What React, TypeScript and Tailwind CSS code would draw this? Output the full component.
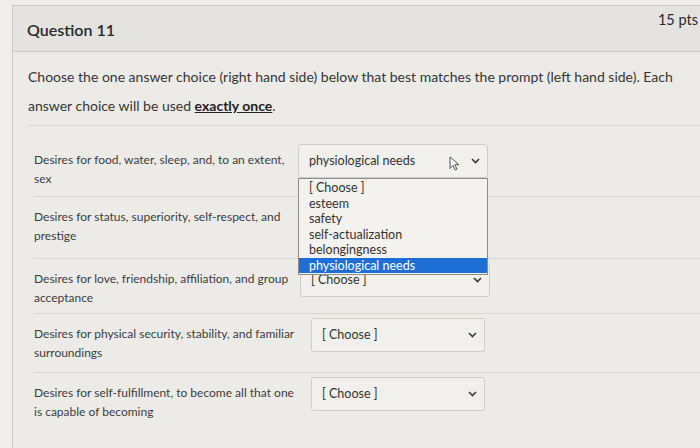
import React from "react";

const OPTIONS = ["[ Choose ]", "esteem", "safety", "self-actualization", "belongingness", "physiological needs"];

function Chevron() {
  return (
    <svg width="9" height="6" viewBox="0 0 9 6" className="shrink-0">
      <path d="M1 1l3.5 3.5L8 1" fill="none" stroke="#3a3a3a" strokeWidth="1.6" />
    </svg>
  );
}

function Cursor() {
  return (
    <svg width="11" height="15" viewBox="0 0 11 15" className="absolute left-[150px] top-[11px]">
      <path d="M1 1v11.5l3-3 2.2 4.5 1.8-.9-2.2-4.4H10z" fill="#f4f4f2" stroke="#555" strokeWidth="1" strokeLinejoin="round" />
    </svg>
  );
}

function Select({ value, width, cursor, hidden }: { value: string; width: string; cursor?: boolean; hidden?: boolean }) {
  return (
    <div
      className={`relative flex items-center justify-between h-[34px] ${width} shrink-0 rounded-[3px] border border-[#cfcdc8] bg-[#f1f0ec] pl-[10px] pr-[7px] text-[12.5px] text-[#333]`}
    >
      {/* covered by the open list */}
      <span className={hidden ? "invisible" : ""}>{value}</span>
      {cursor && <Cursor />}
      <Chevron />
    </div>
  );
}

type Row = { text: string; value: string; textW: string; selW: string; h: string; cursor?: boolean; hidden?: boolean };

const ROWS: Row[] = [
  { text: "Desires for food, water, sleep, and, to an extent, sex", value: "physiological needs", textW: "w-[264px]", selW: "w-[190px]", h: "h-[56px]", cursor: true },
  { text: "Desires for status, superiority, self-respect, and prestige", value: "[ Choose ]", textW: "w-[264px]", selW: "w-[190px]", h: "h-[62px]", hidden: true },
  { text: "Desires for love, friendship, affiliation, and group acceptance", value: "[ Choose ]", textW: "w-[266px]", selW: "w-[190px]", h: "h-[55px]" },
  { text: "Desires for physical security, stability, and familiar surroundings", value: "[ Choose ]", textW: "w-[277px]", selW: "w-[174px]", h: "h-[59px]" },
  { text: "Desires for self-fulfillment, to become all that one is capable of becoming", value: "[ Choose ]", textW: "w-[277px]", selW: "w-[174px]", h: "h-[60px]" },
];

export default function App() {
  return (
    <div
      className="w-[700px] h-[448px] overflow-hidden bg-[#efeeea] pl-[12px] pt-[5px]"
      style={{ fontFamily: "Lato, 'Open Sans', sans-serif" }}
    >
      <div className="h-full border-l border-t border-[#cbc9c4] bg-[#ecebe7]">
        {/* header */}
        <div className="relative h-[46px] bg-[#e4e3df] border-b border-[#cbc9c4] pl-[14px]">
          <div className="pt-[12px] text-[16px] font-semibold text-[#2a2a2a]">Question 11</div>
          <div className="absolute right-[2px] top-[3px] text-[14.5px] text-[#2a2a2a]">15 pts</div>
        </div>

        {/* body */}
        <div className="pl-[15px]">
          <p className="pt-[10px] text-[14px] leading-[29px] text-[#363636]">
            Choose the one answer choice (right hand side) below that best matches the prompt (left hand side). Each
            <br />
            answer choice will be used <span className="font-bold underline text-[#222]">exactly once</span>.
          </p>
          <div className="mt-[5px] border-t border-[#dcdad5]" />

          <div className="relative mt-[14px] pl-[6px]">
            {ROWS.map((r, i) => (
              <div key={i} className={`flex items-start ${r.h} ${i > 0 ? "border-t border-[#d8d6d1]" : ""} pt-[4px]`}>
                <div className={`${r.textW} shrink-0 pt-[6px] pr-[6px] text-[12px] leading-[19px] text-[#3d3d3d]`}>{r.text}</div>
                <Select value={r.value} width={r.selW} cursor={r.cursor} hidden={r.hidden} />
              </div>
            ))}

            {/* open dropdown list */}
            <div className="absolute left-[270px] top-[38px] w-[190px] h-[97px] overflow-hidden border border-[#8d8d8d] bg-[#f3f2ee] text-[12.5px] leading-[15.5px] text-[#333]">
              {OPTIONS.map((o, i) => (
                <div
                  key={o}
                  className={`px-[10px] ${i === 0 ? "pt-[1px]" : ""} ${i === OPTIONS.length - 1 ? "bg-[#1d6fd6] text-white" : ""}`}
                >
                  {o}
                </div>
              ))}
            </div>
          </div>
        </div>
      </div>
    </div>
  );
}
